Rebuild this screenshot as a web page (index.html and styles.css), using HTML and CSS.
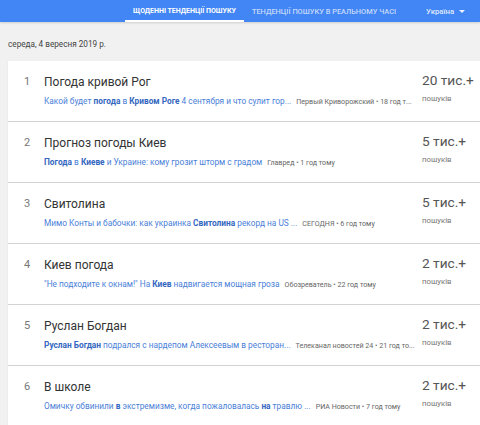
FILE: index.html
```html
<!DOCTYPE html>
<html lang="uk">
<head>
<meta charset="utf-8">
<link rel="stylesheet" href="styles.css">
</head>
<body>
<header class="topbar">
  <nav class="tabs">
    <span class="tab tab-active">ЩОДЕННІ ТЕНДЕНЦІЇ ПОШУКУ</span>
    <span class="tab tab-second">ТЕНДЕНЦІЇ ПОШУКУ В РЕАЛЬНОМУ ЧАСІ</span>
  </nav>
  <div class="country">Україна <span class="caret"></span></div>
</header>
<main class="content">
  <div class="date">середа, 4 вересня 2019 р.</div>
  <div class="list">
    <div class="row">
      <div class="num">1</div>
      <div class="main">
        <div class="title">Погода кривой Рог</div>
        <div class="sub"><span class="snip">Какой будет <b>погода</b> в <b>Кривом Роге</b> 4 сентября и что сулит гор...</span><span class="src">Первый Криворожский • 18 год т...</span></div>
      </div>
      <div class="count"><div class="big">20 тис.+</div><div class="small">пошуків</div></div>
    </div>
    <div class="row">
      <div class="num">2</div>
      <div class="main">
        <div class="title">Прогноз погоды Киев</div>
        <div class="sub"><span class="snip"><b>Погода</b> в <b>Киеве</b> и Украине: кому грозит шторм с градом</span><span class="src">Главред • 1 год тому</span></div>
      </div>
      <div class="count"><div class="big">5 тис.+</div><div class="small">пошуків</div></div>
    </div>
    <div class="row">
      <div class="num">3</div>
      <div class="main">
        <div class="title">Свитолина</div>
        <div class="sub"><span class="snip">Мимо Конты и бабочки: как украинка <b>Свитолина</b> рекорд на US ...</span><span class="src">СЕГОДНЯ • 6 год тому</span></div>
      </div>
      <div class="count"><div class="big">5 тис.+</div><div class="small">пошуків</div></div>
    </div>
    <div class="row">
      <div class="num">4</div>
      <div class="main">
        <div class="title">Киев погода</div>
        <div class="sub"><span class="snip">"Не подходите к окнам!" На <b>Киев</b> надвигается мощная гроза</span><span class="src">Обозреватель • 22 год тому</span></div>
      </div>
      <div class="count"><div class="big">2 тис.+</div><div class="small">пошуків</div></div>
    </div>
    <div class="row">
      <div class="num">5</div>
      <div class="main">
        <div class="title">Руслан Богдан</div>
        <div class="sub"><span class="snip"><b>Руслан Богдан</b> подрался с нардепом Алексеевым в ресторан...</span><span class="src">Телеканал новостей 24 • 21 год то...</span></div>
      </div>
      <div class="count"><div class="big">2 тис.+</div><div class="small">пошуків</div></div>
    </div>
    <div class="row">
      <div class="num">6</div>
      <div class="main">
        <div class="title">В школе</div>
        <div class="sub"><span class="snip">Омичку обвинили <b>в</b> экстремизме, когда пожаловалась <b>на</b> травлю ...</span><span class="src">РИА Новости • 7 год тому</span></div>
      </div>
      <div class="count"><div class="big">2 тис.+</div><div class="small">пошуків</div></div>
    </div>
  </div>
</main>
</body>
</html>
```
FILE: styles.css
```css
html, body {
  margin: 0;
  padding: 0;
}
body {
  background: #f1f1f1;
  font-family: Roboto, "Noto Sans", "Liberation Sans", sans-serif;
  width: 480px;
  height: 425px;
  overflow: hidden;
}
.topbar {
  height: 22px;
  background: #4285f4;
  display: flex;
  align-items: stretch;
  box-shadow: 0 1px 2px rgba(0,0,0,0.15);
}
.tabs {
  display: flex;
  margin-left: 125px;
}
.tab {
  padding: 0 8px;
  font-size: 7px;
  font-weight: 500;
  color: rgba(255,255,255,0.7);
  display: flex;
  align-items: center;
  box-sizing: border-box;
  border-bottom: 2px solid transparent;
  padding-top: 2px;
}
.tab-second {
  font-size: 7.4px;
}
.tab-active {
  color: #fff;
  font-weight: 700;
  border-bottom-color: #fff;
}
.country {
  margin-left: 22px;
  display: flex;
  align-items: center;
  color: rgba(255,255,255,0.85);
  font-size: 7.8px;
  font-weight: 500;
  gap: 5px;
}
.caret {
  width: 0;
  height: 0;
  border-left: 3px solid transparent;
  border-right: 3px solid transparent;
  border-top: 3px solid rgba(255,255,255,0.9);
}
.content {
  padding-left: 8px;
}
.date {
  font-size: 8.2px;
  color: #444;
  height: 39px;
  line-height: 44px;
}
.list {
  display: flex;
  flex-direction: column;
  gap: 1px;
}
.row {
  background: #fff;
  height: 60px;
  box-sizing: border-box;
  display: grid;
  grid-template-columns: 20px 378px 1fr;
  padding-left: 16px;
  box-shadow: 0 1px 1px rgba(0,0,0,0.12);
}
.num {
  font-size: 11px;
  color: #777;
  padding-top: 14px;
}
.main {
  padding-top: 13px;
  min-width: 0;
}
.title {
  font-size: 12px;
  color: #333;
  line-height: 16px;
  white-space: nowrap;
}
.sub {
  margin-top: 6px;
  font-size: 8.3px;
  line-height: 10px;
  white-space: nowrap;
  display: flex;
  align-items: baseline;
  gap: 5px;
}
.snip {
  color: #4a80d8;
}
.snip b {
  color: #3367c0;
  font-weight: 700;
}
.src {
  color: #666;
  font-size: 7.1px;
}
.count {
  padding-top: 10px;
}
.big {
  font-size: 13.7px;
  color: #555;
  line-height: 18px;
  white-space: nowrap;
}
.small {
  margin-top: 5px;
  font-size: 7.8px;
  line-height: 10px;
  color: #777;
}
```
